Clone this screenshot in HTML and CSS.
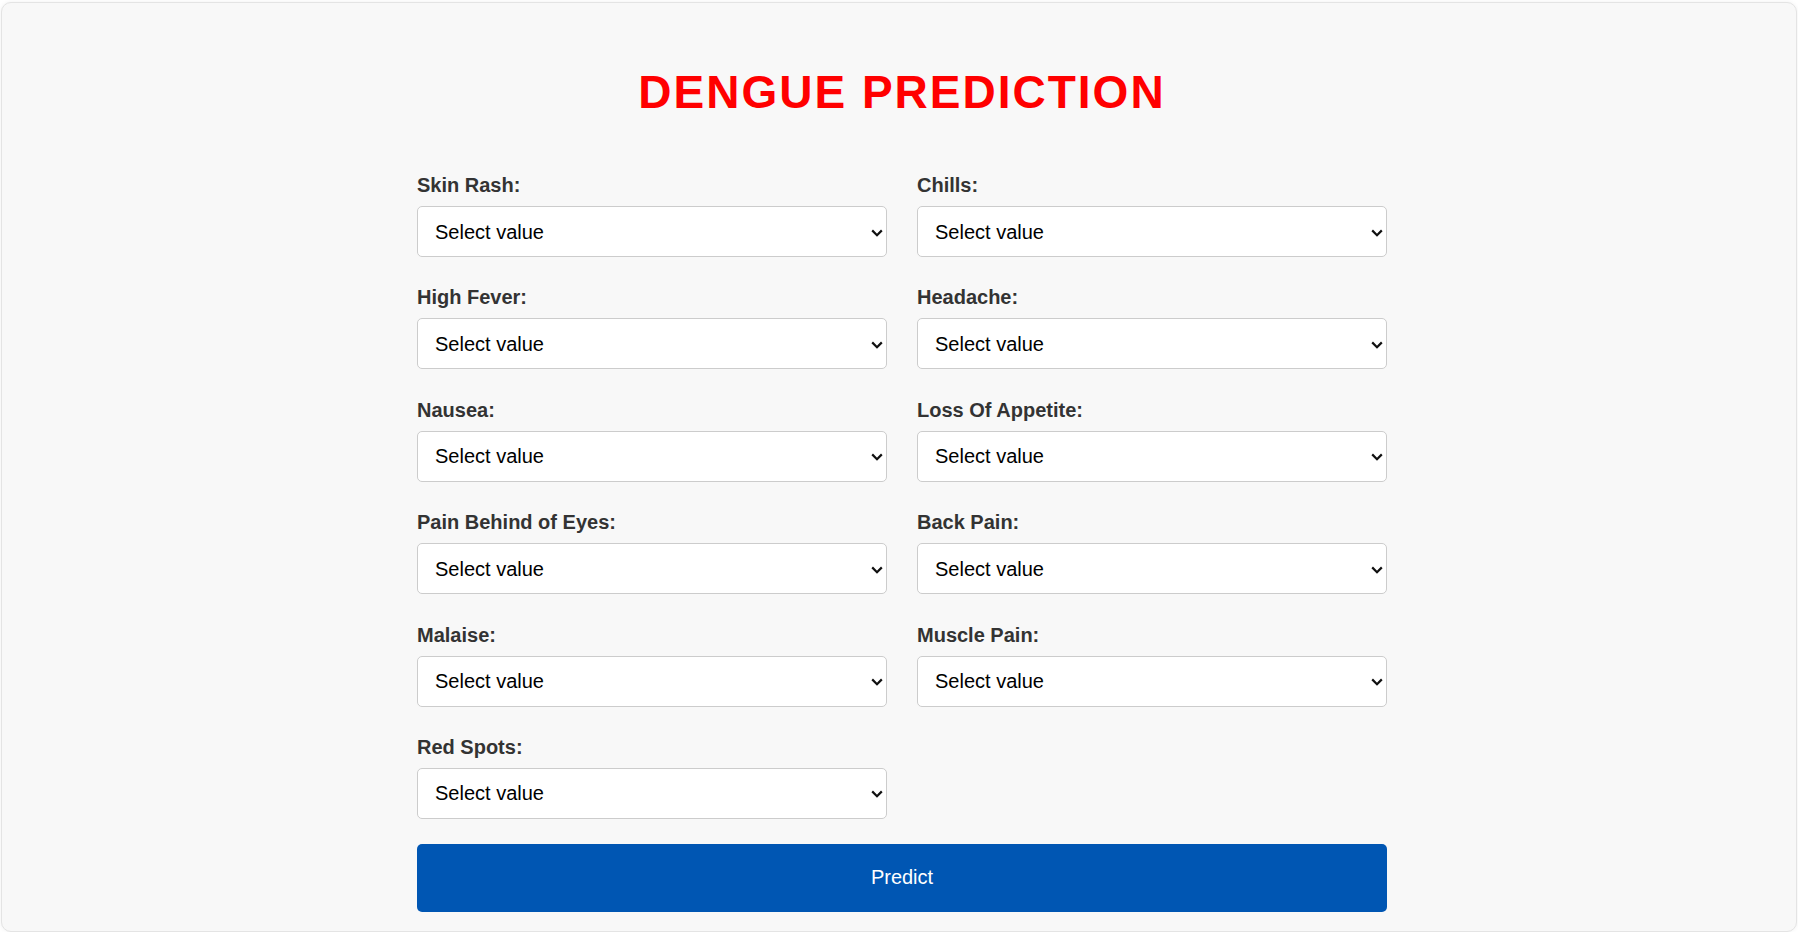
FILE: index.html
```html
<!DOCTYPE html>
<html lang="en">
<head>
<meta charset="utf-8">
<title>Dengue Prediction</title>
<link rel="stylesheet" href="styles.css">
</head>
<body>
<div class="container">
  <h1 class="title">DENGUE PREDICTION</h1>
  <form class="form">
    <div class="grid">
      <div class="field"><label>Skin Rash:</label><div class="select-wrap"><select><option>Select value</option><option>Yes</option><option>No</option></select><svg class="chev" width="12" height="8" viewBox="0 0 12 8"><path d="M1.2 1.4 L6 6.2 L10.8 1.4" fill="none" stroke="#111" stroke-width="2.2"/></svg></div></div>
      <div class="field"><label>Chills:</label><div class="select-wrap"><select><option>Select value</option><option>Yes</option><option>No</option></select><svg class="chev" width="12" height="8" viewBox="0 0 12 8"><path d="M1.2 1.4 L6 6.2 L10.8 1.4" fill="none" stroke="#111" stroke-width="2.2"/></svg></div></div>
      <div class="field"><label>High Fever:</label><div class="select-wrap"><select><option>Select value</option><option>Yes</option><option>No</option></select><svg class="chev" width="12" height="8" viewBox="0 0 12 8"><path d="M1.2 1.4 L6 6.2 L10.8 1.4" fill="none" stroke="#111" stroke-width="2.2"/></svg></div></div>
      <div class="field"><label>Headache:</label><div class="select-wrap"><select><option>Select value</option><option>Yes</option><option>No</option></select><svg class="chev" width="12" height="8" viewBox="0 0 12 8"><path d="M1.2 1.4 L6 6.2 L10.8 1.4" fill="none" stroke="#111" stroke-width="2.2"/></svg></div></div>
      <div class="field"><label>Nausea:</label><div class="select-wrap"><select><option>Select value</option><option>Yes</option><option>No</option></select><svg class="chev" width="12" height="8" viewBox="0 0 12 8"><path d="M1.2 1.4 L6 6.2 L10.8 1.4" fill="none" stroke="#111" stroke-width="2.2"/></svg></div></div>
      <div class="field"><label>Loss Of Appetite:</label><div class="select-wrap"><select><option>Select value</option><option>Yes</option><option>No</option></select><svg class="chev" width="12" height="8" viewBox="0 0 12 8"><path d="M1.2 1.4 L6 6.2 L10.8 1.4" fill="none" stroke="#111" stroke-width="2.2"/></svg></div></div>
      <div class="field"><label>Pain Behind of Eyes:</label><div class="select-wrap"><select><option>Select value</option><option>Yes</option><option>No</option></select><svg class="chev" width="12" height="8" viewBox="0 0 12 8"><path d="M1.2 1.4 L6 6.2 L10.8 1.4" fill="none" stroke="#111" stroke-width="2.2"/></svg></div></div>
      <div class="field"><label>Back Pain:</label><div class="select-wrap"><select><option>Select value</option><option>Yes</option><option>No</option></select><svg class="chev" width="12" height="8" viewBox="0 0 12 8"><path d="M1.2 1.4 L6 6.2 L10.8 1.4" fill="none" stroke="#111" stroke-width="2.2"/></svg></div></div>
      <div class="field"><label>Malaise:</label><div class="select-wrap"><select><option>Select value</option><option>Yes</option><option>No</option></select><svg class="chev" width="12" height="8" viewBox="0 0 12 8"><path d="M1.2 1.4 L6 6.2 L10.8 1.4" fill="none" stroke="#111" stroke-width="2.2"/></svg></div></div>
      <div class="field"><label>Muscle Pain:</label><div class="select-wrap"><select><option>Select value</option><option>Yes</option><option>No</option></select><svg class="chev" width="12" height="8" viewBox="0 0 12 8"><path d="M1.2 1.4 L6 6.2 L10.8 1.4" fill="none" stroke="#111" stroke-width="2.2"/></svg></div></div>
      <div class="field"><label>Red Spots:</label><div class="select-wrap"><select><option>Select value</option><option>Yes</option><option>No</option></select><svg class="chev" width="12" height="8" viewBox="0 0 12 8"><path d="M1.2 1.4 L6 6.2 L10.8 1.4" fill="none" stroke="#111" stroke-width="2.2"/></svg></div></div>
    </div>
    <button type="button" class="predict">Predict</button>
  </form>
</div>
</body>
</html>
```
FILE: styles.css
```css
html, body {
  margin: 0;
  padding: 0;
  background: #ffffff;
}
body {
  padding: 2px 1px 1px 1px;
  font-family: "Liberation Sans", Arial, sans-serif;
}
.container {
  background: #f8f8f8;
  border: 1px solid #e4e4e4;
  border-radius: 10px;
  box-shadow: 0 0 4px rgba(0, 0, 0, 0.06);
  padding: 66px 0 19px 6px;
}
.title {
  margin: 0 0 59px 0;
  text-align: center;
  color: #ff0000;
  font-size: 46px;
  line-height: 46px;
  font-weight: bold;
  letter-spacing: 2px;
}
.form {
  width: 970px;
  margin: 0 auto;
}
.grid {
  display: grid;
  grid-template-columns: 470px 470px;
  column-gap: 30px;
  row-gap: 29.4px;
}
.field {
  display: flex;
  flex-direction: column;
}
.field label {
  font-size: 20px;
  line-height: 23px;
  font-weight: bold;
  color: #333333;
  margin-bottom: 9px;
}
.select-wrap {
  position: relative;
}
.field select {
  display: block;
  box-sizing: border-box;
  height: 51px;
  width: 100%;
  padding: 0 30px 0 17px;
  font-family: "Liberation Sans", Arial, sans-serif;
  font-size: 20px;
  color: #000000;
  background: #ffffff;
  border: 1px solid #cccccc;
  border-radius: 5px;
  appearance: none;
  -webkit-appearance: none;
}
.chev {
  position: absolute;
  right: 4px;
  top: 50%;
  margin-top: -3px;
  pointer-events: none;
}
.predict {
  display: block;
  box-sizing: border-box;
  width: 100%;
  height: 68px;
  margin-top: 25px;
  background: #0056b3;
  color: #ffffff;
  border: none;
  border-radius: 5px;
  font-family: "Liberation Sans", Arial, sans-serif;
  font-size: 20px;
}
```
